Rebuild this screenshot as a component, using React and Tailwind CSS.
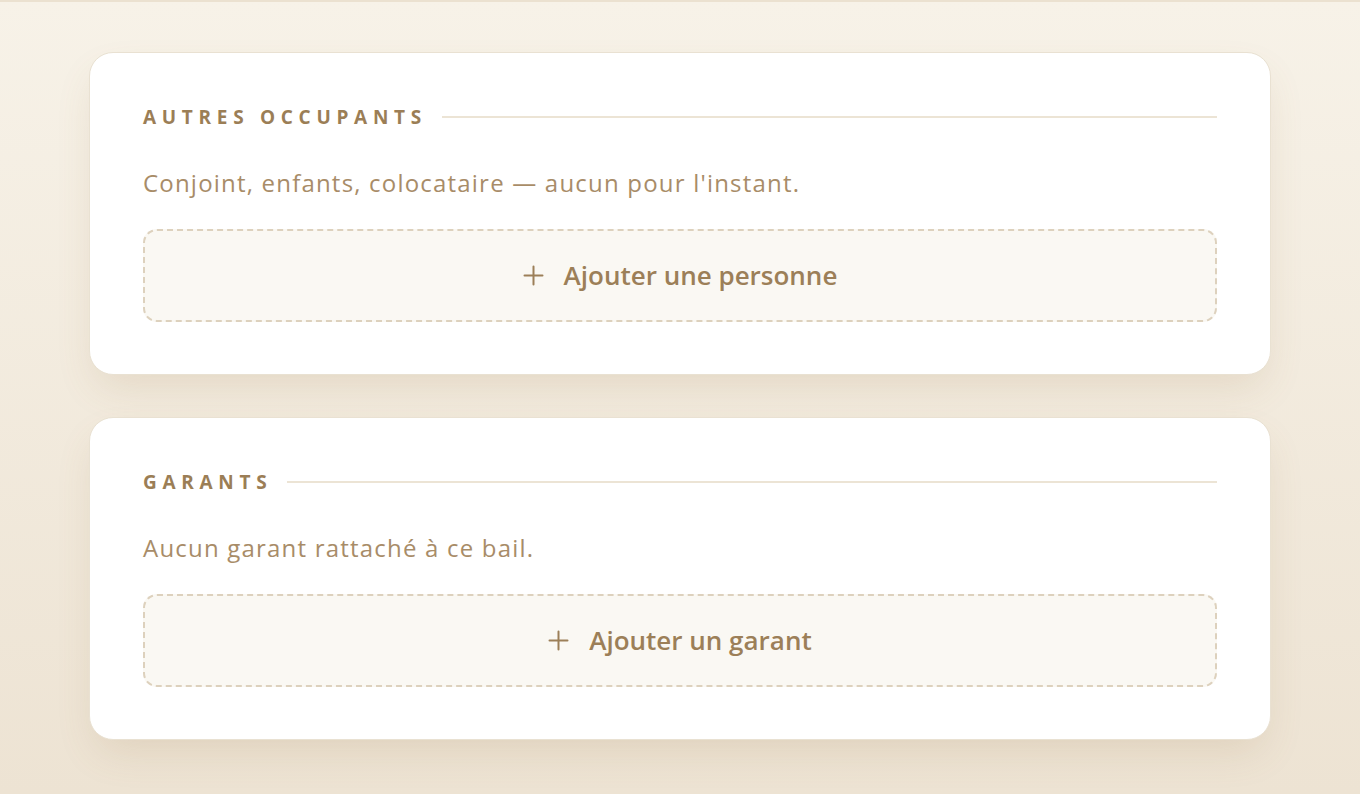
const sections = [
  {
    title: "Autres occupants",
    text: "Conjoint, enfants, colocataire — aucun pour l'instant.",
    action: "Ajouter une personne",
  },
  {
    title: "Garants",
    text: "Aucun garant rattaché à ce bail.",
    action: "Ajouter un garant",
  },
];

function PlusIcon() {
  return (
    <svg width="21" height="21" viewBox="0 0 21 21" fill="none" stroke="currentColor" strokeWidth={2} strokeLinecap="round">
      <path d="M10.5 1.5v18M1.5 10.5h18" />
    </svg>
  );
}

function SectionCard({ title, text, action }) {
  return (
    <div className="bg-white border border-[#e9e1d2] rounded-[24px] px-[53px] pt-[51px] pb-[52px] shadow-[0_18px_40px_-8px_rgba(150,115,60,0.16)]">
      <div className="flex items-center gap-[15px] h-[26px]">
        <h2 className="text-[19px] font-bold uppercase tracking-[0.3em] text-[#9b7e56] whitespace-nowrap">
          {title}
        </h2>
        <div className="flex-1 h-[2px] bg-[#ece4d5]" />
      </div>
      <p className="mt-[35px] text-[24px] leading-[36px] tracking-[0.05em] text-[#a88c68]">{text}</p>
      <button className="mt-[28px] w-full h-[93px] flex items-center justify-center gap-[20px] rounded-[14px] border-2 border-dashed border-[#ddd1bd] bg-[#faf8f3] text-[#9c7f58] text-[26px] font-semibold">
        <PlusIcon />
        {action}
      </button>
    </div>
  );
}

export default function App() {
  return (
    <div
      className="min-h-[794px] border-t-2 border-[#ebe1d0] bg-gradient-to-b from-[#f7f2e8] to-[#ede3d3] px-[89px] pt-[50px] pb-[50px]"
      style={{ fontFamily: "'Open Sans', Lato, sans-serif" }}
    >
      <div className="flex flex-col gap-[42px]">
        {sections.map((s, i) => (
          <SectionCard key={i} {...s} />
        ))}
      </div>
    </div>
  );
}
